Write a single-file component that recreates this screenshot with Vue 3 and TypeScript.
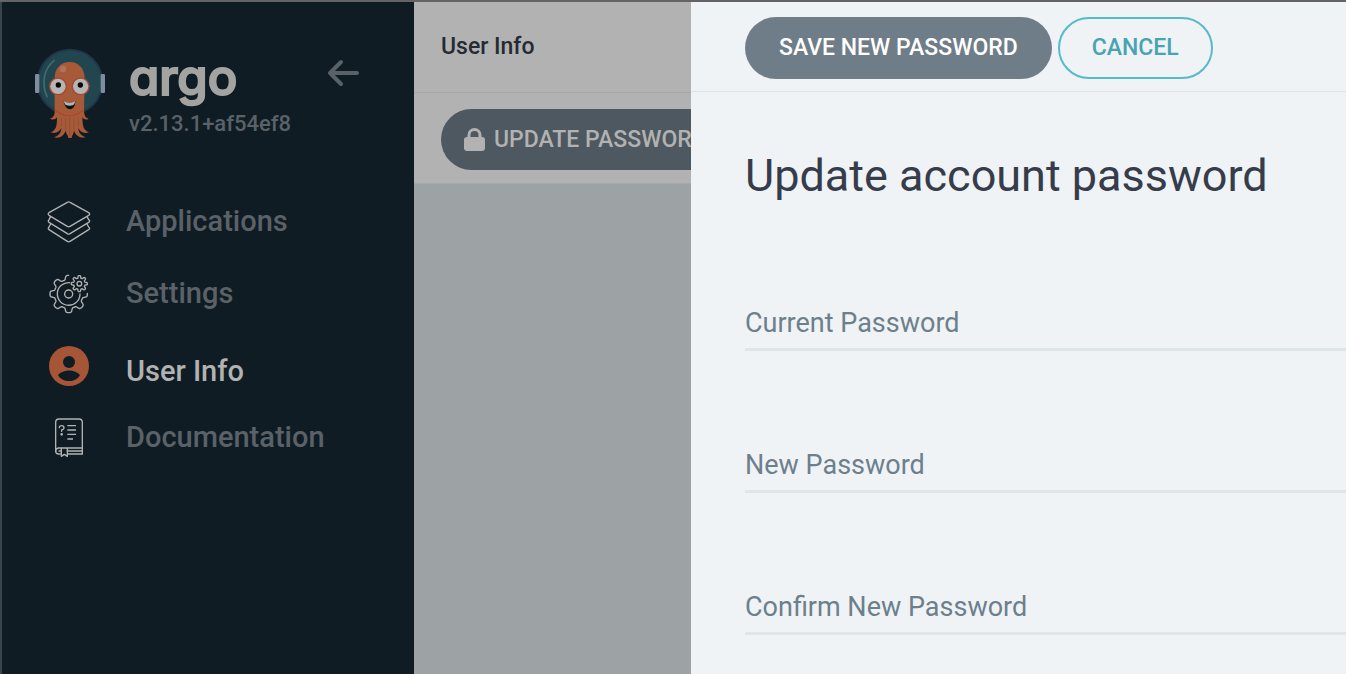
<script setup lang="ts">
import { ref } from 'vue'

interface NavItem {
  label: string
  icon: 'apps' | 'settings' | 'user' | 'docs'
  active?: boolean
}

interface Field {
  id: string
  label: string
}

const navItems: NavItem[] = [
  { label: 'Applications', icon: 'apps' },
  { label: 'Settings', icon: 'settings' },
  { label: 'User Info', icon: 'user', active: true },
  { label: 'Documentation', icon: 'docs' },
]

const fields: Field[] = [
  { id: 'current-password', label: 'Current Password' },
  { id: 'new-password', label: 'New Password' },
  { id: 'confirm-password', label: 'Confirm New Password' },
]

const values = ref<Record<string, string>>({})

// Outline of an eight-toothed cog between two angles, in degrees
function cog(cx: number, cy: number, outer: number, inner: number, from: number, to: number): string {
  const mid = (outer + inner) / 2
  const amp = (outer - inner) / 2
  const points: string[] = []
  for (let deg = from; deg <= to; deg += 2) {
    const rad = (deg * Math.PI) / 180
    const r = mid + (amp * Math.tanh(2.4 * Math.cos(8 * rad))) / Math.tanh(2.4)
    points.push(`${(cx + r * Math.cos(rad)).toFixed(1)} ${(cy + r * Math.sin(rad)).toFixed(1)}`)
  }
  return 'M' + points.join('L')
}

const bigCog = cog(115, 314, 56, 43, -2, 270)
const smallCog = cog(147, 283, 24, 17, 0, 360) + 'Z'
</script>

<template>
  <div class="app">
    <aside class="sidebar">
      <header class="brand">
        <svg class="mascot" viewBox="45 39 210 276" aria-hidden="true">
          <circle cx="150" cy="141" r="100" fill="#21364a" />
          <circle cx="150" cy="141" r="94" fill="#22464f" />
          <path d="M103 76C72 100 63 144 81 185" fill="none" stroke="#416b70" stroke-width="5" stroke-linecap="round" />
          <rect x="45" y="117" width="13" height="57" rx="4" fill="#7e8da2" />
          <rect x="242" y="117" width="13" height="57" rx="4" fill="#7e8da2" />
          <path
            d="M104 130C104 98 124 81 149 81S194 99 194 130L192 228C193 244 197 248 206 251C198 256 191 253 187 247C188 274 190 286 207 292C191 297 180 291 175 279C176 293 181 300 197 307C179 310 168 302 162 287C160 299 155 302 155 309H145C145 301 139 299 137 287C132 302 119 311 102 307C118 301 123 294 124 279C118 291 107 297 92 292C108 286 111 274 111 247C106 254 98 256 90 251C99 248 104 243 104 228Z"
            fill="#a65a38"
          />
          <path d="M104 224Q148 260 192 224" fill="none" stroke="#a8492f" stroke-width="4" />
          <path d="M124 250V276M137 250V285M149 248V303M162 250V285M175 250V276" stroke="#8c4b32" stroke-width="2" />
          <circle cx="114" cy="154" r="27" fill="#a5482f" />
          <circle cx="182" cy="154" r="27" fill="#a5482f" />
          <circle cx="114" cy="154" r="23" fill="#b5b5b5" />
          <circle cx="182" cy="154" r="23" fill="#b5b5b5" />
          <circle cx="115" cy="150" r="8" fill="#050505" />
          <circle cx="181" cy="150" r="8" fill="#050505" />
          <circle cx="129" cy="102" r="10" fill="#b07359" />
          <path d="M131 198Q149 209 166 198C166 231 135 231 131 198Z" fill="#111" />
          <path d="M131 198Q149 209 166 198Q164 208 159 211Q148 214 137 210Q133 206 131 198Z" fill="#b5b5b5" />
        </svg>
        <div class="brand-text">
          <div class="wordmark">argo</div>
          <div class="version">v2.13.1+af54ef8</div>
        </div>
        <button class="collapse" type="button" aria-label="Collapse sidebar">
          <svg width="34" height="30" viewBox="0 0 34 30" fill="none" stroke="#5a6268" stroke-width="4" stroke-linecap="round" stroke-linejoin="round">
            <path d="M31 15H4M15 4L4 15L15 26" />
          </svg>
        </button>
      </header>

      <nav class="nav">
        <a v-for="item in navItems" :key="item.label" href="#" :class="['nav-link', { active: item.active }]">
          <span class="nav-icon">
            <svg v-if="item.icon === 'apps'" width="44" height="42" viewBox="50 35 132 126" fill="none" stroke="#b2b2b2" stroke-width="4" stroke-linejoin="round">
              <path d="M111 39Q115 36 119 39L175 70Q181 74 175 78L119 111Q115 114 111 111L56 78Q51 74 56 70Z" />
              <path d="M61 82L56 91Q52 95 56 99L111 133Q115 136 119 133L175 99Q181 95 175 91L170 82" />
              <path d="M61 104L56 113Q52 117 56 121L111 156Q115 159 119 156L175 121Q181 117 175 113L170 104" />
            </svg>
            <svg v-else-if="item.icon === 'settings'" width="40" height="40" viewBox="56 254 120 120" fill="none" stroke="#b2b2b2" stroke-width="4" stroke-linejoin="round" stroke-linecap="round">
              <path :d="bigCog" />
              <path :d="smallCog" />
              <circle cx="115" cy="314" r="12" />
              <circle cx="147" cy="283" r="7" />
              <path d="M118 280A34 34 0 1 0 149 314" />
            </svg>
            <svg v-else-if="item.icon === 'user'" width="40" height="40" viewBox="0 0 40 40">
              <circle cx="20" cy="20" r="20" fill="#a65636" />
              <circle cx="20" cy="16" r="6" fill="#0f1c24" />
              <path d="M9 29C14 23 26 23 31 29C27 37 13 37 9 29Z" fill="#0f1c24" />
            </svg>
            <svg v-else width="30" height="40" viewBox="73 266 90 120" fill="none" stroke="#b2b2b2" stroke-width="4" stroke-linecap="round">
              <path d="M92 374H87Q78 374 78 365V279Q78 269 88 269H148Q158 269 158 279V374H115" />
              <path d="M78 366Q78 356 88 356H158M88 365H95M113 365H156" />
              <path d="M95 357V381L104 375L113 381V357" stroke-linejoin="round" />
              <path d="M113 289H139M113 302H139M113 315H139M113 329H130" stroke-linecap="butt" />
              <path d="M89 295Q89 289 96 289Q103 289 103 296Q103 300 96 302V306" />
              <circle cx="96" cy="315" r="2" fill="#b2b2b2" />
            </svg>
          </span>
          <span class="nav-label">{{ item.label }}</span>
        </a>
      </nav>
    </aside>

    <main class="main">
      <h2 class="page-title">User Info</h2>
      <div class="toolbar">
        <button class="btn update" type="button">
          <svg width="21" height="24" viewBox="0 0 21 24" aria-hidden="true">
            <path d="M5 11V7A5.500 5.500 0 0 1 16 7V11" fill="none" stroke="#b2b2b2" stroke-width="3" />
            <rect x="0" y="9" width="21" height="14" rx="3" fill="#b2b2b2" />
          </svg>
          <span>UPDATE PASSWORD</span>
        </button>
      </div>
    </main>

    <section class="panel" aria-labelledby="panel-title">
      <div class="panel-actions">
        <button class="btn save" type="submit" form="password-form">SAVE NEW PASSWORD</button>
        <button class="btn cancel" type="button">CANCEL</button>
      </div>
      <form id="password-form" class="panel-body" @submit.prevent>
        <h1 id="panel-title">Update account password</h1>
        <div v-for="field in fields" :key="field.id" class="field">
          <label :for="field.id">{{ field.label }}</label>
          <input :id="field.id" v-model="values[field.id]" type="password" autocomplete="off" />
        </div>
      </form>
    </section>
  </div>
</template>

<style>
body {
  margin: 0;
  overflow: hidden;
}
</style>

<style scoped>
.app {
  position: relative;
  display: flex;
  min-height: 100vh;
  box-sizing: border-box;
  overflow: hidden;
  border-top: 2px solid #666364;
  font-family: Roboto, "Liberation Sans", sans-serif;
  background: #9da2a5;
}

.sidebar {
  width: 414px;
  flex: none;
  box-sizing: border-box;
  border-left: 2px solid #39454c;
  background: #0f1c24;
}

.brand {
  display: flex;
  align-items: flex-start;
  padding: 46px 54px 0 33px;
  height: 138px;
  box-sizing: border-box;
}

.mascot {
  width: 70px;
  height: 92px;
  flex: none;
}

.brand-text {
  flex: 1;
  padding-left: 24px;
}

.wordmark {
  height: 64px;
  font: 500 49px/60px Inter, sans-serif;
  font-feature-settings: "cv11";
  color: #a3a4a2;
  -webkit-text-stroke: 2px #a3a4a2;
}

.version {
  font-size: 22px;
  line-height: 24px;
  font-weight: 500;
  color: #5a6268;
}

.collapse {
  flex: none;
  margin: 10px 0 0;
  padding: 0;
  border: 0;
  background: none;
  line-height: 0;
}

.nav {
  padding-top: 46px;
}

.nav-link {
  display: flex;
  align-items: center;
  height: 72px;
  box-sizing: border-box;
  padding: 16px 0 16px 45px;
  color: #5a6268;
  font-size: 29px;
  line-height: 26px;
  font-weight: 500;
  text-decoration: none;
}

.nav-link.active {
  align-items: flex-end;
  color: #b2b2b2;
}

.nav-icon {
  display: flex;
  align-items: center;
  justify-content: center;
  width: 44px;
  height: 40px;
  margin-right: 35px;
}

.nav-icon svg {
  flex: none;
}

.nav-label {
  padding-bottom: 2px;
}

.main {
  flex: 1;
  min-width: 0;
}

.page-title {
  margin: 0;
  padding: 0 27px;
  font-size: 23px;
  line-height: 90px;
  font-weight: 500;
  color: #262a33;
  background: #b2b2b2;
  border-bottom: 1px solid #a6a8a9;
}

.toolbar {
  padding: 16px 27px 13px;
  background: #b2b2b2;
  border-bottom: 1px solid #a6a8a9;
}

.btn {
  box-sizing: border-box;
  height: 62px;
  border: 2px solid transparent;
  border-radius: 31px;
  padding: 0 32px;
  font: 500 23px/58px Roboto, "Liberation Sans", sans-serif;
  white-space: nowrap;
}

.update {
  display: flex;
  align-items: center;
  gap: 9px;
  height: 61px;
  padding: 0 21px;
  line-height: 56px;
  background: #4e5860;
  color: #b2b2b2;
}

.panel {
  position: absolute;
  top: 0;
  right: 0;
  bottom: 0;
  left: 691px;
  overflow: hidden;
  background: #eff3f6;
}

.panel-actions {
  display: flex;
  gap: 6px;
  padding: 15px 54px 12px;
  border-bottom: 1px solid #dee4e6;
}

.save {
  background: #6f7d88;
  color: #fff;
}

.cancel {
  border-color: #56bacd;
  background: transparent;
  color: #48a3b3;
}

.panel-body {
  padding: 54px 0 0 54px;
}

h1 {
  margin: 0 0 65px;
  font-size: 45px;
  line-height: 60px;
  font-weight: 400;
  color: #363c4a;
}

.field {
  display: grid;
  height: 80px;
  margin-bottom: 62px;
}

.field label,
.field input {
  grid-area: 1 / 1;
}

.field label {
  align-self: end;
  padding-bottom: 12px;
  font-size: 27px;
  line-height: 32px;
  color: #6d7f8b;
}

.field input {
  align-self: end;
  width: 100%;
  height: 52px;
  box-sizing: border-box;
  padding: 0;
  border: 0;
  border-bottom: 3px solid #dee6e8;
  border-radius: 0;
  outline: none;
  background: transparent;
  font: 400 27px/32px Roboto, "Liberation Sans", sans-serif;
  color: #363c4a;
}
</style>
